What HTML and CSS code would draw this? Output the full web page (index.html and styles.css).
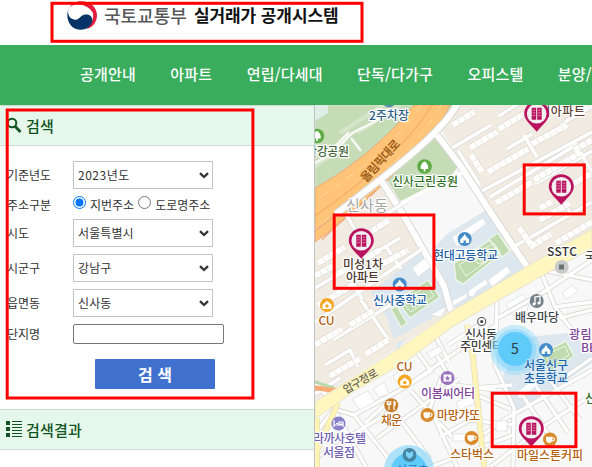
FILE: index.html
```html
<!DOCTYPE html>
<html lang="ko">
<head>
<meta charset="utf-8">
<title>국토교통부 실거래가 공개시스템</title>
<link rel="stylesheet" href="styles.css">
</head>
<body>
<header class="header">
  <svg class="emblem" width="32" height="31" viewBox="66 0 32 31">
    <path d="M68 11C71 3 76 1 82 1.2C90 1.500 97 7 97 15.500C97 23 91 28.500 86 29C91 25 94 20 93 13C89 5 76 2 68 11Z" fill="#e51b3e"/>
    <path d="M69 8C65 16 68 29 80 29.800C87 30 92.500 25 92.500 20C92.500 16 89 14 85 14.500C80 15 79 20 75 19.500C69 19 67 13 69 8Z" fill="#063466"/>
    <path d="M69 8C73 3 82 3 88 8C92 11 93 15 92.500 20C92 15 88 13 84 14.500C80 16 79 20 75 19.500C69 19 67 13 69 8Z" fill="#fff"/>
  </svg>
  <span class="ministry">국토교통부</span>
  <span class="system">실거래가 공개시스템</span>
</header>
<nav class="nav">
  <a>공개안내</a><a>아파트</a><a>연립/다세대</a><a>단독/다가구</a><a>오피스텔</a><a>분양/</a>
</nav>
<main class="main">
  <aside class="side">
    <h2 class="title">
      <svg width="16" height="17" viewBox="0 0 16 17" fill="none" stroke="#125523"><circle cx="6" cy="6" r="4.300" stroke-width="2"/><path d="M9 9.300L14.500 15" stroke-width="2.800"/></svg>
      <span>검색</span>
    </h2>
    <form class="form">
      <div class="row"><label>기준년도</label><div class="pick year"><select><option>2023년도</option></select><svg width="10" height="7" viewBox="0 0 10 7"><path d="M1 1.200L5 5L9 1.200" fill="none" stroke="#333" stroke-width="2.300"/></svg></div></div>
      <div class="row radios"><label>주소구분</label><input type="radio" name="addr" checked><span>지번주소</span><input type="radio" name="addr"><span>도로명주소</span></div>
      <div class="row"><label>시도</label><div class="pick"><select><option>서울특별시</option></select><svg width="10" height="7" viewBox="0 0 10 7"><path d="M1 1.200L5 5L9 1.200" fill="none" stroke="#333" stroke-width="2.300"/></svg></div></div>
      <div class="row"><label>시군구</label><div class="pick"><select><option>강남구</option></select><svg width="10" height="7" viewBox="0 0 10 7"><path d="M1 1.200L5 5L9 1.200" fill="none" stroke="#333" stroke-width="2.300"/></svg></div></div>
      <div class="row"><label>읍면동</label><div class="pick"><select><option>신사동</option></select><svg width="10" height="7" viewBox="0 0 10 7"><path d="M1 1.200L5 5L9 1.200" fill="none" stroke="#333" stroke-width="2.300"/></svg></div></div>
      <div class="row name"><label>단지명</label><input class="text" type="text"></div>
      <button class="submit" type="button">검 색</button>
    </form>
    <h2 class="title result">
      <svg width="16" height="17" viewBox="0 0 16 17" fill="#125523"><path d="M0 0h4v4H0zM0 6h4v4H0zM0 12h4v4H0zM6 0h10v1H6zM6 3h10v1H6zM6 6h10v1H6zM6 9h10v1H6zM6 12h10v1H6zM6 15h10v1H6z"/></svg>
      <span>검색결과</span>
    </h2>
  </aside>
  <svg class="map" width="277" height="362" viewBox="315 105 277 362">
    <defs>
      <g id="pin"><path d="M-12.500 0A12.500 12.500 0 1 1 12.500 0C12.500 6 6.500 10.500 0 18C-6.500 10.500 -12.500 6 -12.500 0Z" fill="#b9125f"/><circle r="9.800" fill="#f3eff0"/><path d="M-5 -6h4.500V6H-5zM.5 -6H5V6H.5z" fill="#b9125f"/><path d="M-4 -3.500h2.600M-4 -.8h2.600M-4 1.900h2.600M1.400 -3.500H4M1.400 -.8H4M1.400 1.900H4" stroke="#e79fbe" stroke-width=".8"/></g>
      <g id="tree"><circle r="7.300" fill="#5fab45"/><path d="M0 -5C3 -4 4.500 1 3.500 2.500H.8V5H-.8V2.500H-3.500C-4.500 1 -3 -4 0 -5Z" fill="#fff"/></g>
      <g id="school"><circle r="7" fill="#458bc9"/><path d="M0 -5L1.500 -2.500L4.500 .5V4H1.200V1.500H-1.200V4H-4.500V.5L-1.500 -2.500Z" fill="#fff"/></g>
      <g id="shop"><circle r="7" fill="#f5a623"/><path d="M-4.500 -.5L0 -4L4.500 -.5V4H-4.500Z" fill="#fff"/><circle cy="1" r="1.700" fill="#f5a623"/></g>
      <g id="cup"><circle r="7" fill="#d98a2b"/><path d="M-4 -2.800H2.500V0C2.500 4.500 -4 4.500 -4 0Z" fill="#fff"/><path d="M2.500 -1.800C5.500 -2 5 1.800 2 1.500" fill="none" stroke="#fff" stroke-width="1.100"/></g>
    </defs>
    <rect x="315" y="105" width="277" height="362" fill="#f8f8f8"/>

    <path class="park" d="M315 105H430L395 130L315 195Z"/>
    <path class="park" d="M440 105H456L435 134L383 176L330 215L315 235V200Z"/>
    <path class="park" d="M386 178L437 137L459 165L452 174L401 202Z"/>
    <path d="M315 105H328V113L315 121Z" fill="#dceee5"/>
    <path class="estate" d="M440 128L456 105H592V230L529 265L489 208L460 160Z"/>
    <path class="estate" d="M379 181L399 211L446 287L452 311L410 339L315 401V237L336 214Z"/>
    <path class="campus" d="M371 293L422 251L436 271L450 308L394 339L386 316Z"/>
    <path class="campus" d="M432 250L447 234L488 209L526 267L456 309L443 280Z"/>
    <path class="campus" d="M503 375L528 337L567 333L592 348V363L518 413L510 405Z"/>
    <path class="campus" d="M396 344L407 337L397 351Z"/>

    <g stroke="#dbe7d0" fill="none" stroke-width="4" opacity=".8"><path d="M340 133L383 105M357 133L400 105M315 166L338 151"/></g>
    <g fill="none" stroke="#f8f9f5" stroke-width="2.500"><path d="M315 163C335 153 340 145 350 135C359 127 374 127 389 108M351 138L361 151M323 159L349 132"/></g>

    <path d="M414 105C387 139 350 169 315 188V242C349 219 387 181 417 151C436 132 442 120 450 105Z" fill="#ffc477" stroke="#efa878" stroke-width="1"/>
    <path d="M432 105C408 145 365 181 315 216" fill="none" stroke="#f5ad64" stroke-width="1.200"/>
    <path d="M421 105C393 147 352 176 315 201M441 105C423 141 375 182 315 229" fill="none" stroke="#ffd7a0" stroke-width="1" stroke-dasharray="9 7"/>
    <path d="M371 184C352 202 335 216 315 231M376 190C358 207 338 223 322 240" fill="none" stroke="#ecaa83" stroke-width="1.300"/>

    <g class="case"><path d="M459 101C447 126 409 157 381 179L336 214M437 135L460 165L489 210L528 268M379 177L401 211L444 286L451 311" stroke-width="8"/><path d="M592 132L482 191M452 148L491 125M507 149L532 134M524 135L537 157M592 151L535 184M592 202L503 253M490 197L576 145L592 172M458 151L480 185M565 203L572 216M592 107L575 115L546 136M499 116L524 100"  stroke-width="5"/></g>
    <g class="road"><path d="M459 101C447 126 409 157 381 179L336 214M437 135L460 165L489 210L528 268M379 177L401 211L444 286L451 311" stroke-width="6"/><path d="M592 132L482 191M452 148L491 125M507 149L532 134M524 135L537 157M592 151L535 184M592 202L503 253M490 197L576 145L592 172M458 151L480 185M565 203L572 216M592 107L575 115L546 136M499 116L524 100" stroke-width="3.500"/></g>
    <g class="case" stroke-width="5"><path d="M315 288L400 238M333 340L415 290M315 322L422 249M385 245L401 269M346 214L361 240M361 300L388 339M325 365L350 350L358 367M315 394L340 378M345 270L362 299M315 382L330 400M388 213L407 201"/></g>
    <g class="road" stroke-width="3.500"><path d="M315 288L400 238M333 340L415 290M315 322L422 249M385 245L401 269M346 214L361 240M361 300L388 339M325 365L350 350L358 367M315 394L340 378M345 270L362 299M315 382L330 400M401 203L430 188L462 173M388 213L407 201"/></g>

    <g class="blocks-edge"><path d="M453 125L474 112M470 148L497 132M499 129L524 114M488 172L528 149M532 144L567 125M471 155L482 172M496 203L532 182M534 180L580 153M540 208L553 201M573 184L592 173M574 150L592 140M556 243L592 222M519 228L532 246L551 234M540 220L570 203M318 263L345 247M366 235L389 220M332 277L380 250M318 305L353 285M370 271L408 250M315 345L342 329M350 325L373 311M330 376L361 358M366 354L388 340M345 388L369 373M315 276L333 266M502 242L508 252M571 117L592 105"/></g>
    <g class="blocks"><path d="M453 125L474 112M470 148L497 132M499 129L524 114M488 172L528 149M532 144L567 125M471 155L482 172M496 203L532 182M534 180L580 153M540 208L553 201M573 184L592 173M574 150L592 140M556 243L592 222M519 228L532 246L551 234M540 220L570 203M318 263L345 247M366 235L389 220M332 277L380 250M318 305L353 285M370 271L408 250M315 345L342 329M350 325L373 311M330 376L361 358M366 354L388 340M345 388L369 373M315 276L333 266M502 242L508 252M571 117L592 105"/></g>

    <g fill="#bfdaae" stroke="#edf4e8" stroke-width="1.500"><path d="M397 301L428 280L440 297L410 318Z"/><path d="M391 309L397 306L407 323L401 327Z"/><path d="M454 263L496 236L506 250L463 284L456 280Z"/><path d="M489 239L498 233L510 251L502 257Z"/><path d="M541 354L566 341L574 356L549 373Z"/></g>
    <g fill="none" stroke="#edf7e6" stroke-width="1"><path d="M402 302L427 286L434 296L411 312ZM414 294L423 305M459 265L494 243L500 252L466 276ZM476 255L484 264M546 355L565 346L569 355L551 366Z"/><circle cx="418" cy="300" r="4"/><circle cx="480" cy="260" r="4"/></g>
    <g fill="#fff" stroke="#dce1e6" stroke-width=".8"><path d="M412 268L425 258L431 267L418 277ZM468 291L486 279L488 284L477 291L473 297L469 296ZM467 293L452 301L453 306L467 298ZM452 237L483 218L486 224L464 240L457 247ZM488 280L507 266L511 272L492 287ZM506 304L523 294L526 299L509 309ZM513 311L529 304L526 313L514 318ZM516 393L540 374L545 379L520 399ZM430 315L447 306L441 317Z"/></g>

    <g class="case" stroke-width="5"><path d="M592 260L542 293L498 318M537 269L592 280M541 272L555 307L592 302M555 307L574 333M592 310L560 318M497 301L495 365L514 408L513 467M592 370L507 418L468 445M548 377L580 420M536 386L568 432M523 396L552 440M559 381L592 358M592 395L548 423L490 467M315 434L334 409L366 467M334 409L354 415L402 389L456 352L496 325M402 389L431 371L418 353M354 415L389 459M389 405L430 459M411 391L452 437M365 423L386 404M377 438L412 413L459 379M347 438L391 411M315 458L348 440L335 420M434 350L454 385L496 390M442 376L430 408L457 467M473 388L512 385M440 437L470 420L513 425M430 467L513 435M436 337L449 362M448 345L482 323M479 396L510 409"/></g>
    <g class="road" stroke-width="3.300"><path d="M592 260L542 293L498 318M537 269L592 280M541 272L555 307L592 302M555 307L574 333M592 310L560 318M497 301L495 365L514 408L513 467M592 370L507 418L468 445M548 377L580 420M536 386L568 432M523 396L552 440M559 381L592 358M592 395L548 423L490 467M315 434L334 409L366 467M334 409L354 415L402 389L456 352L496 325M402 389L431 371L418 353M354 415L389 459M389 405L430 459M411 391L452 437M365 423L386 404M377 438L412 413L459 379M347 438L391 411M315 458L348 440L335 420M434 350L454 385L496 390M442 376L430 408L457 467M473 388L512 385M440 437L470 420L513 425M430 467L513 435M436 337L449 362M448 345L482 323M479 396L510 409"/></g>
    <g fill="#fff" stroke="#dedede" stroke-width=".8"><path d="M352 399L368 391L375 402L360 410ZM373 389L384 382L389 394L379 397ZM427 353L440 346L443 351L431 359ZM456 402L473 396L475 403L459 410ZM496 421L507 421V431H496ZM562 293L573 285L578 291L567 299ZM453 434H469V441H453ZM393 376L403 369L406 377L397 382Z"/></g>

    <path d="M315 382L334 388" stroke="#b8d9ae" stroke-width="3"/><path d="M315 388C323 388 329 391 337 390" stroke="#f8ac74" stroke-width="5" fill="none"/>
    <path d="M467 325L473 357L484 467M338 403L315 455M317 418V467" fill="none" stroke="#e5dfb4" stroke-width="6"/>
    <path d="M467 325L473 357L484 467M338 403L315 455M317 418V467" fill="none" stroke="#fff4b8" stroke-width="4.500"/>
    <path d="M315 402L404 345L452 311L526 267L592 229V248L499 300L452 327L404 363L356 390L315 419Z" fill="#fff7bf" stroke="#e6e2cb" stroke-width="1"/>

    <circle cx="389" cy="101" r="6.500" fill="#5d8cb0"/>
    <use href="#tree" x="317" y="136"/><use href="#tree" x="424.500" y="166.500"/>
    <use href="#school" x="464.700" y="239"/><use href="#school" x="399.700" y="284.500"/>
    <use href="#shop" x="327" y="305"/><use href="#shop" x="404.700" y="381.500"/>
    <use href="#cup" x="427.500" y="415"/><use href="#cup" x="471.500" y="438"/><use href="#cup" x="550" y="439.500"/>
    <circle cx="391.300" cy="405.300" r="7" fill="#c87d2a"/><path d="M389 401V410M387.300 401V404.500H390.700V401M394 401V410M394 401C396 403 395.500 405 394 406" fill="none" stroke="#fff" stroke-width="1.200"/>
    <circle cx="447.500" cy="378" r="7" fill="#9a72bd"/><path d="M443.500 374.500H451.500V381.500H443.500Z" fill="#fff"/><path d="M447.500 375.500L448.300 377.300L450.200 377.500L448.800 378.800L449.200 380.600L447.500 379.700L445.800 380.600L446.200 378.800L444.800 377.500L446.700 377.300Z" fill="#9a72bd"/>
    <circle cx="338.500" cy="423.500" r="7" fill="#8a7fca"/><path d="M334 420V427M334 425H343V427M336 423.500H338M339 422H343V424H339Z" fill="none" stroke="#fff" stroke-width="1.200"/>
    <circle cx="561.700" cy="267" r="7" fill="#c9cbcb"/><path d="M559 264.500h5v5h-5z" fill="#6b7475"/>
    <circle cx="536.700" cy="301" r="7" fill="#74838a"/><path d="M535 304V297L540 296V303" fill="none" stroke="#fff" stroke-width="1.300"/><circle cx="534" cy="304" r="1.600" fill="#fff"/><circle cx="539" cy="303" r="1.600" fill="#fff"/>
    <circle cx="481.700" cy="321.500" r="4" fill="#fff" stroke="#555" stroke-width="1.100"/><circle cx="481.700" cy="321.500" r="1.600" fill="#444"/>

    <g class="labels">
      <text x="369" y="120" textLength="40" fill="#315f88">2주차장</text>
      <text x="306" y="156" textLength="43" fill="#45653c">한강공원</text>
      <text x="392" y="186" textLength="66" fill="#2f7028">신사근린공원</text>
      <text x="346" y="211" textLength="42" class="district">신사동</text>
      <text transform="translate(366 183) rotate(-48)" textLength="52" class="highway">올림픽대로</text>
      <text x="539" y="116" textLength="46" fill="#5b4238">대아파트</text>
      <text x="343" y="269" textLength="40" fill="#4b382e">미성1차</text>
      <text x="346" y="282" textLength="33" fill="#4b382e">아파트</text>
      <text x="433" y="260" textLength="65" fill="#1e62a8">현대고등학교</text>
      <text x="373" y="305" textLength="54" fill="#1e62a8">신사중학교</text>
      <text x="318.500" y="325" textLength="16" fill="#b56012">CU</text>
      <text x="396.500" y="370.500" textLength="16" fill="#b56012">CU</text>
      <text x="547" y="256" textLength="30" fill="#333">SSTC</text>
      <text x="585" y="261" fill="#444">국</text>
      <text x="515" y="322" textLength="44" fill="#3e4549">배우마당</text>
      <text x="465" y="338.500" textLength="32" fill="#3d3d3d">신사동</text>
      <text x="460" y="351" textLength="43" fill="#3d3d3d">주민센터</text>
      <text x="569" y="339" textLength="34" fill="#80449a">광림교</text>
      <text x="581" y="352" textLength="24" fill="#80449a">BBC</text>
      <text transform="translate(346 394) rotate(-30)" textLength="38" class="street">압구정로</text>
      <text x="421" y="398" textLength="54" fill="#80449a">이봄씨어터</text>
      <text x="381" y="425" textLength="21" fill="#b56012">채운</text>
      <text x="437" y="420" textLength="43" fill="#b56012">마망갸또</text>
      <text x="313" y="443" textLength="53" fill="#7060b1">라까사호텔</text>
      <text x="323" y="457" textLength="32" fill="#7060b1">서울점</text>
      <text x="450" y="459" textLength="44" fill="#b56012">스타벅스</text>
      <text x="517" y="460" textLength="66" fill="#b56012">마일스톤커피</text>
      <text x="585" y="403" fill="#2f7028">신</text>
    </g>
    <circle cx="515" cy="350" r="25" fill="#8fd9fa" opacity=".45"/><circle cx="515" cy="350" r="21" fill="#7bd3fb" opacity=".5"/><circle cx="515" cy="349" r="17" fill="#5fcbfb"/>
    <use href="#school" x="546" y="350"/>
    <g class="labels soft">
      <text x="524" y="370" textLength="44" fill="#1e62a8">서울신구</text>
      <text x="524" y="382.500" textLength="44" fill="#1e62a8">초등학교</text>
    </g>
    <circle cx="409" cy="470" r="25" fill="#8fd9fa" opacity=".7"/><circle cx="409" cy="471" r="18" fill="#5fcbfb"/>
    <circle cx="409.500" cy="455" r="7" fill="#4686a5"/><path d="M406 451L409.500 453L413 451V456L409.500 459L406 456Z" fill="#7dd3f7"/>
    <text x="511" y="354" class="count">5</text>
    <text x="396" y="475" class="under">신구초</text>
    <use href="#pin" x="536.700" y="113.700"/><use href="#pin" x="561.300" y="186.700"/><use href="#pin" x="361.300" y="240.700"/><use href="#pin" x="531.300" y="428.700"/>
  </svg>
</main>
<svg class="marks" width="592" height="467" viewBox="0 0 592 467">
  <rect x="52" y="3.300" width="310" height="38"/>
  <rect x="7.200" y="110" width="245.700" height="288"/>
  <rect x="334.200" y="215" width="99.700" height="73.300"/>
  <rect x="524.200" y="164.900" width="60.100" height="49"/>
  <rect x="492.200" y="393.200" width="83.700" height="53.500"/>
</svg>
</body>
</html>
```

FILE: styles.css
```css
* { box-sizing: border-box; }
body {
  margin: 0;
  width: 592px;
  height: 467px;
  overflow: hidden;
  position: relative;
  background: #fff;
  font-family: "Noto Sans CJK KR", sans-serif;
  font-size: 12px;
  color: #333;
}
.header { height: 45px; display: flex; align-items: flex-start; padding-left: 66px; white-space: nowrap; }
.emblem { flex: none; }
.ministry, .system { font-size: 18px; line-height: 30px; }
.ministry { margin-left: 6px; width: 90px; color: #58595b; font-weight: 500; }
.system { color: #111; font-weight: 700; font-size: 17px; letter-spacing: -0.1px; }
.nav {
  height: 60px;
  display: flex;
  gap: 34.3px;
  padding-left: 80px;
  overflow: hidden;
  white-space: nowrap;
  background: #39ad5c;
  color: #fff;
  font-size: 15px;
  font-weight: 500;
  letter-spacing: 0.2px;
  line-height: 58px;
}
.nav a { flex: none; }
.main { display: flex; height: 362px; }
.side { width: 315px; flex: none; border-right: 1px solid #bfc3c3; }
.map { flex: none; display: block; }
.title {
  margin: 0;
  height: 41px;
  display: flex;
  align-items: center;
  gap: 4px;
  padding-left: 6px;
  background: #e6f7eb;
  border-top: 1px solid #cddcd3;
  border-bottom: 1px solid #cddcd3;
  color: #125523;
  font-size: 15px;
  font-weight: 500;
  line-height: 20px;
}
.title span { letter-spacing: 0.2px; }
.form { height: 263px; padding: 15px 0 0 7px; }
.row { display: flex; align-items: center; height: 28px; margin-bottom: 7px; white-space: nowrap; }
.row label { width: 66px; flex: none; padding-bottom: 2px; }
.pick { width: 140px; height: 28px; display: flex; align-items: center; border: 1px solid #c4c4c4; }
.pick select {
  appearance: none;
  width: 125px;
  height: 26px;
  padding: 0 0 1px 4px;
  border: 0;
  background: none;
  font: inherit;
  letter-spacing: 0.1px;
  color: inherit;
}
.pick.year select { letter-spacing: 0.5px; }
.row:has(+ .radios) { margin-bottom: 0; }
.radios { height: 30px; margin: 0; }
.radios label { padding: 0; }
.radios input { width: 13px; height: 13px; margin: 0 4px 4px 0; }
.radios span + input { margin-left: 4px; }
.name { height: 20px; margin: 0; }
.text { width: 151px; height: 20px; border: 1px solid #767676; border-radius: 2px; padding: 0 2px; }
.submit {
  display: block;
  width: 120px;
  height: 30px;
  margin: 15px 0 0 88px;
  padding: 0;
  border: 0;
  border-radius: 1px;
  background: #4171cf;
  color: #fff;
  font: 700 16px/30px "Noto Sans CJK KR", sans-serif;
}
.park { fill: #c5dcb7; stroke: #d7e4cc; }
.estate { fill: #f2ebe1; }
.campus { fill: #dce7ef; }
.case { fill: none; stroke: #d9d8d6; }
.road { fill: none; stroke: #fff; }
.blocks, .blocks-edge { fill: none; stroke-dasharray: 6.200 .8; }
.blocks { stroke: #fff; stroke-width: 6; }
.blocks-edge { stroke: #ddd8d0; stroke-width: 7.500; }
.labels text {
  font-size: 12px;
  font-weight: 500;
  stroke: #fff;
  stroke-width: 2.500px;
  stroke-linejoin: round;
  paint-order: stroke;
}
.labels.soft text { stroke: #dff0fa; stroke-width: 1.500px; }
.labels .district { font-size: 15px; font-weight: 400; fill: #a5a5a5; }
.labels .highway { font-weight: 700; fill: #a0601b; stroke: #ffc477; }
.labels .street { font-size: 11px; fill: #69645a; stroke: #fff7bf; }
.count { font-size: 14px; fill: #303a40; }
.under { font-size: 12px; fill: #2878b4; }
.marks { position: absolute; left: 0; top: 0; pointer-events: none; fill: none; stroke: #f00; stroke-width: 3; }
```
